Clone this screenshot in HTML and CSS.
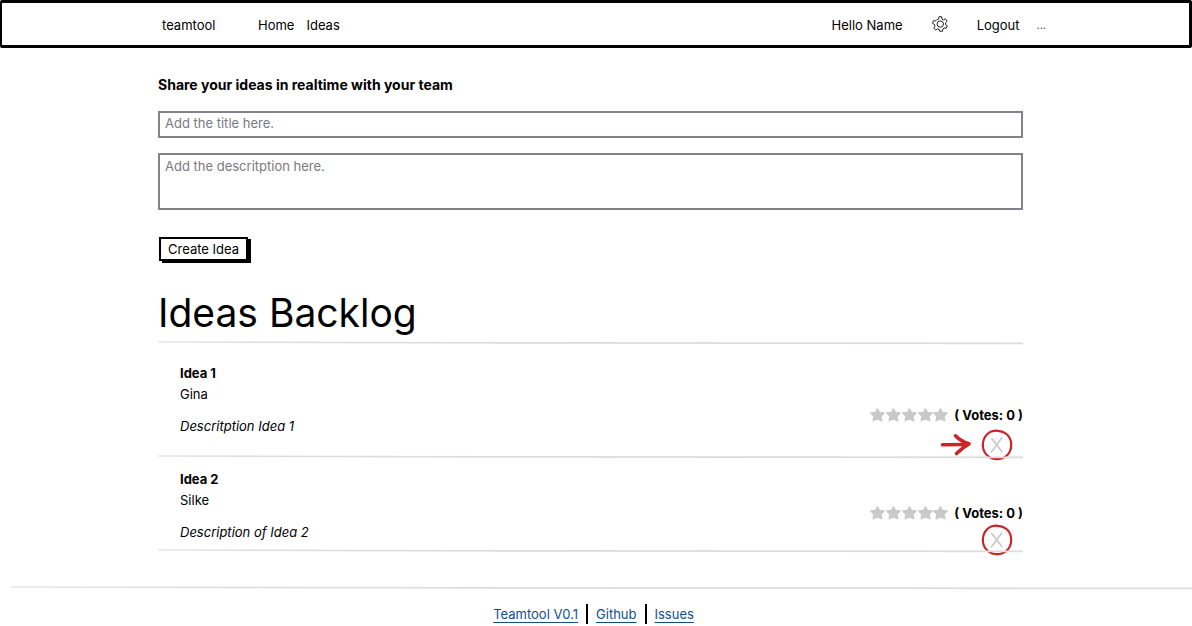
FILE: index.html
```html
<!DOCTYPE html>
<html lang="en">
<head>
<meta charset="utf-8">
<title>teamtool</title>
<link rel="stylesheet" href="styles.css">
</head>
<body>
<svg class="defs" aria-hidden="true">
  <symbol id="rule" viewBox="0 0 100 4" preserveAspectRatio="none"><path d="M0 .4 L20 .7 L45 1 L75 1.3 L100 1.6 V3.2 L75 3.1 L45 2.8 L20 2.3 L0 1.6Z" fill="#dcdcdc"/></symbol>
  <symbol id="stars" viewBox="0 0 78 14">
    <g fill="#c9c9c9" stroke="#c9c9c9" stroke-width="1.6" stroke-linejoin="round">
      <path id="star" d="M7.5 1 L9.3 4.6 L14 5 L10.8 8.3 L11.8 12.6 L7.5 10.7 L3.3 12.6 L4 8.3 L.9 5 L5.5 4.6Z"/>
      <use href="#star" x="16"/><use href="#star" x="32"/><use href="#star" x="48"/><use href="#star" x="63"/>
    </g>
  </symbol>
  <symbol id="remove" viewBox="0 0 32 32">
    <path d="M16.5 1.7 C8 1.2 2.3 7 1.9 15.2 C1.3 23 7 29.6 15 30.2 C24 30.5 30 24.5 30.2 16.5 C30.4 7.5 24.5 1.9 15.5 1.9" fill="none" stroke="#cc2529" stroke-width="2.2"/>
    <path d="M10.8 9.5 L20.8 22.5 M20.7 9 L10.5 22.8" fill="none" stroke="#c8c8c8" stroke-width="1.6" stroke-linecap="round"/>
  </symbol>
</svg>
<header class="navbar">
  <nav class="nav-main">
    <a class="brand" href="#">teamtool</a>
    <a href="#">Home</a>
    <a href="#">Ideas</a>
  </nav>
  <nav class="nav-user">
    <span>Hello Name</span>
    <button class="icon-button" type="button" aria-label="Settings">
      <svg width="16" height="16" viewBox="0 0 16 16" fill="none" stroke="#222" stroke-linejoin="round">
        <path d="M7 .7 L9.8 .8 L9.9 3 L11.5 3.8 L13.5 2.9 L15.2 5.4 L13.5 7 L13.6 8.7 L15.3 9.8 L14.2 12.2 L12 12 L10.8 13 L10.6 15.2 L7.8 15.3 L7.1 13.3 L5.5 12.8 L3.7 14 L1.8 12.1 L2.9 10.1 L2.5 8.6 L.6 7.4 L1.3 4.8 L3.6 4.9 L4.9 3.6 L6.6 3Z"/>
        <circle cx="8.3" cy="8" r="3.2"/>
      </svg>
    </button>
    <a class="logout" href="#">Logout</a>
    <a class="more" href="#">...</a>
  </nav>
</header>
<main class="content">
  <form class="idea-form">
    <h2>Share your ideas in realtime with your team</h2>
    <input class="field" type="text" aria-label="Title" placeholder="Add the title here.">
    <textarea class="field area" aria-label="Description" placeholder="Add the descritption here."></textarea>
    <button class="create" type="button">Create Idea</button>
  </form>
  <h1>Ideas Backlog</h1>
  <svg class="rule"><use href="#rule"/></svg>
  <article class="idea first">
    <div class="text">
      <h3>Idea 1</h3>
      <p>Gina</p>
      <p class="description">Descritption Idea 1</p>
    </div>
    <div class="rating">
      <div class="votes"><svg class="stars" role="img" aria-label="Rating"><use href="#stars"/></svg><span>( Votes: 0 )</span></div>
      <div class="actions">
        <svg class="arrow" viewBox="0 0 32 24" fill="none" stroke="#cc2529" stroke-width="3.6" stroke-linejoin="round" stroke-linecap="round"><path d="M2.500 11.700 L27 11.500"/><path d="M15.500 2.800 C18 5.500 23 9 29 10.800 C24 13.500 20 17 16.500 20.500"/></svg>
        <button class="icon-button" type="button" aria-label="Delete Idea 1"><svg class="remove"><use href="#remove"/></svg></button>
      </div>
    </div>
  </article>
  <svg class="rule"><use href="#rule"/></svg>
  <article class="idea second">
    <div class="text">
      <h3>Idea 2</h3>
      <p>Silke</p>
      <p class="description">Description of Idea 2</p>
    </div>
    <div class="rating">
      <div class="votes"><svg class="stars" role="img" aria-label="Rating"><use href="#stars"/></svg><span>( Votes: 0 )</span></div>
      <div class="actions">
        <button class="icon-button" type="button" aria-label="Delete Idea 2"><svg class="remove"><use href="#remove"/></svg></button>
      </div>
    </div>
  </article>
  <svg class="rule"><use href="#rule"/></svg>
</main>
<footer class="footer">
  <svg class="rule"><use href="#rule"/></svg>
  <nav class="footer-links">
    <a href="#">Teamtool V0.1</a>
    <a href="#">Github</a>
    <a href="#">Issues</a>
  </nav>
</footer>
</body>
</html>
```
FILE: styles.css
```css
* { box-sizing: border-box; }
body {
  margin: 0;
  background: #fff;
  color: #000;
  font: 13px/20px Inter, "Liberation Sans", sans-serif;
}
h1, h2, h3, p { margin: 0; font-size: 13px; }
a { color: inherit; text-decoration: none; }
svg { display: block; }
.defs { position: absolute; width: 0; height: 0; }
.icon-button { display: block; padding: 0; border: 0; background: none; }

.navbar {
  display: flex;
  justify-content: space-between;
  align-items: center;
  height: 48px;
  padding: 2px 143px 0 160px;
  border: solid #000;
  border-width: 3px 3px 3px 2px;
  border-radius: 2px;
}
.nav-main, .nav-user { display: flex; align-items: center; }
.nav-main { gap: 12px; }
.brand { width: 84px; }
.nav-user .icon-button { margin: 0 29px 2px; }
.logout { margin-right: 17px; }
.more { color: #555; font-size: 11px; }

.content { padding: 27px 169px 0 158px; }
.idea-form { display: flex; flex-direction: column; align-items: flex-start; }
.idea-form h2 { margin-bottom: 16px; font-size: 14px; font-weight: 700; }
.field {
  width: 100%;
  height: 27px;
  margin: 0 0 15px;
  padding: 0 5px 3px;
  border: 2px solid #84808c;
  border-radius: 0;
  background: #fff;
  font: inherit;
  resize: none;
}
.field::placeholder { color: #7b7982; opacity: 1; }
.area { height: 57px; padding-top: 1px; margin-bottom: 27px; }
.create {
  height: 24px;
  margin-left: 1px;
  padding: 0 7px;
  border: 2px solid #000;
  background: #fff;
  box-shadow: 3px 2px 0 #000;
  color: #000;
  font: inherit;
  line-height: 18px;
}
h1 { margin-top: 27px; padding-bottom: 3px; font-size: 39px; line-height: 50px; font-weight: 400; }
.rule { width: 100%; height: 4px; }

.idea { display: flex; justify-content: space-between; padding-left: 22px; }
.idea h3, .idea p { line-height: 21px; }
.idea .description { margin-top: 11px; font-style: italic; }
.rating { display: flex; flex-direction: column; align-items: flex-end; justify-content: flex-end; }
.votes { display: flex; align-items: center; gap: 6px; font-weight: 700; }
.stars { width: 78px; height: 14px; }
.actions { display: flex; align-items: center; gap: 9px; margin: 4px 10px -6px 0; }
.second .actions { margin-top: 1px; margin-bottom: -7px; }
.arrow { width: 32px; height: 24px; }
.remove { width: 32px; height: 32px; }
.first { height: 110px; padding-top: 18px; }
.second { height: 90px; padding-top: 10px; }

.footer { padding: 33px 0 0 11px; }
.footer-links { display: flex; justify-content: center; margin-top: 14px; padding-right: 16px; }
.footer-links a { padding: 0 8px; color: #104e8f; text-decoration: underline; text-underline-offset: 3px; }
.footer-links a + a { border-left: 2px solid #000; }
```
